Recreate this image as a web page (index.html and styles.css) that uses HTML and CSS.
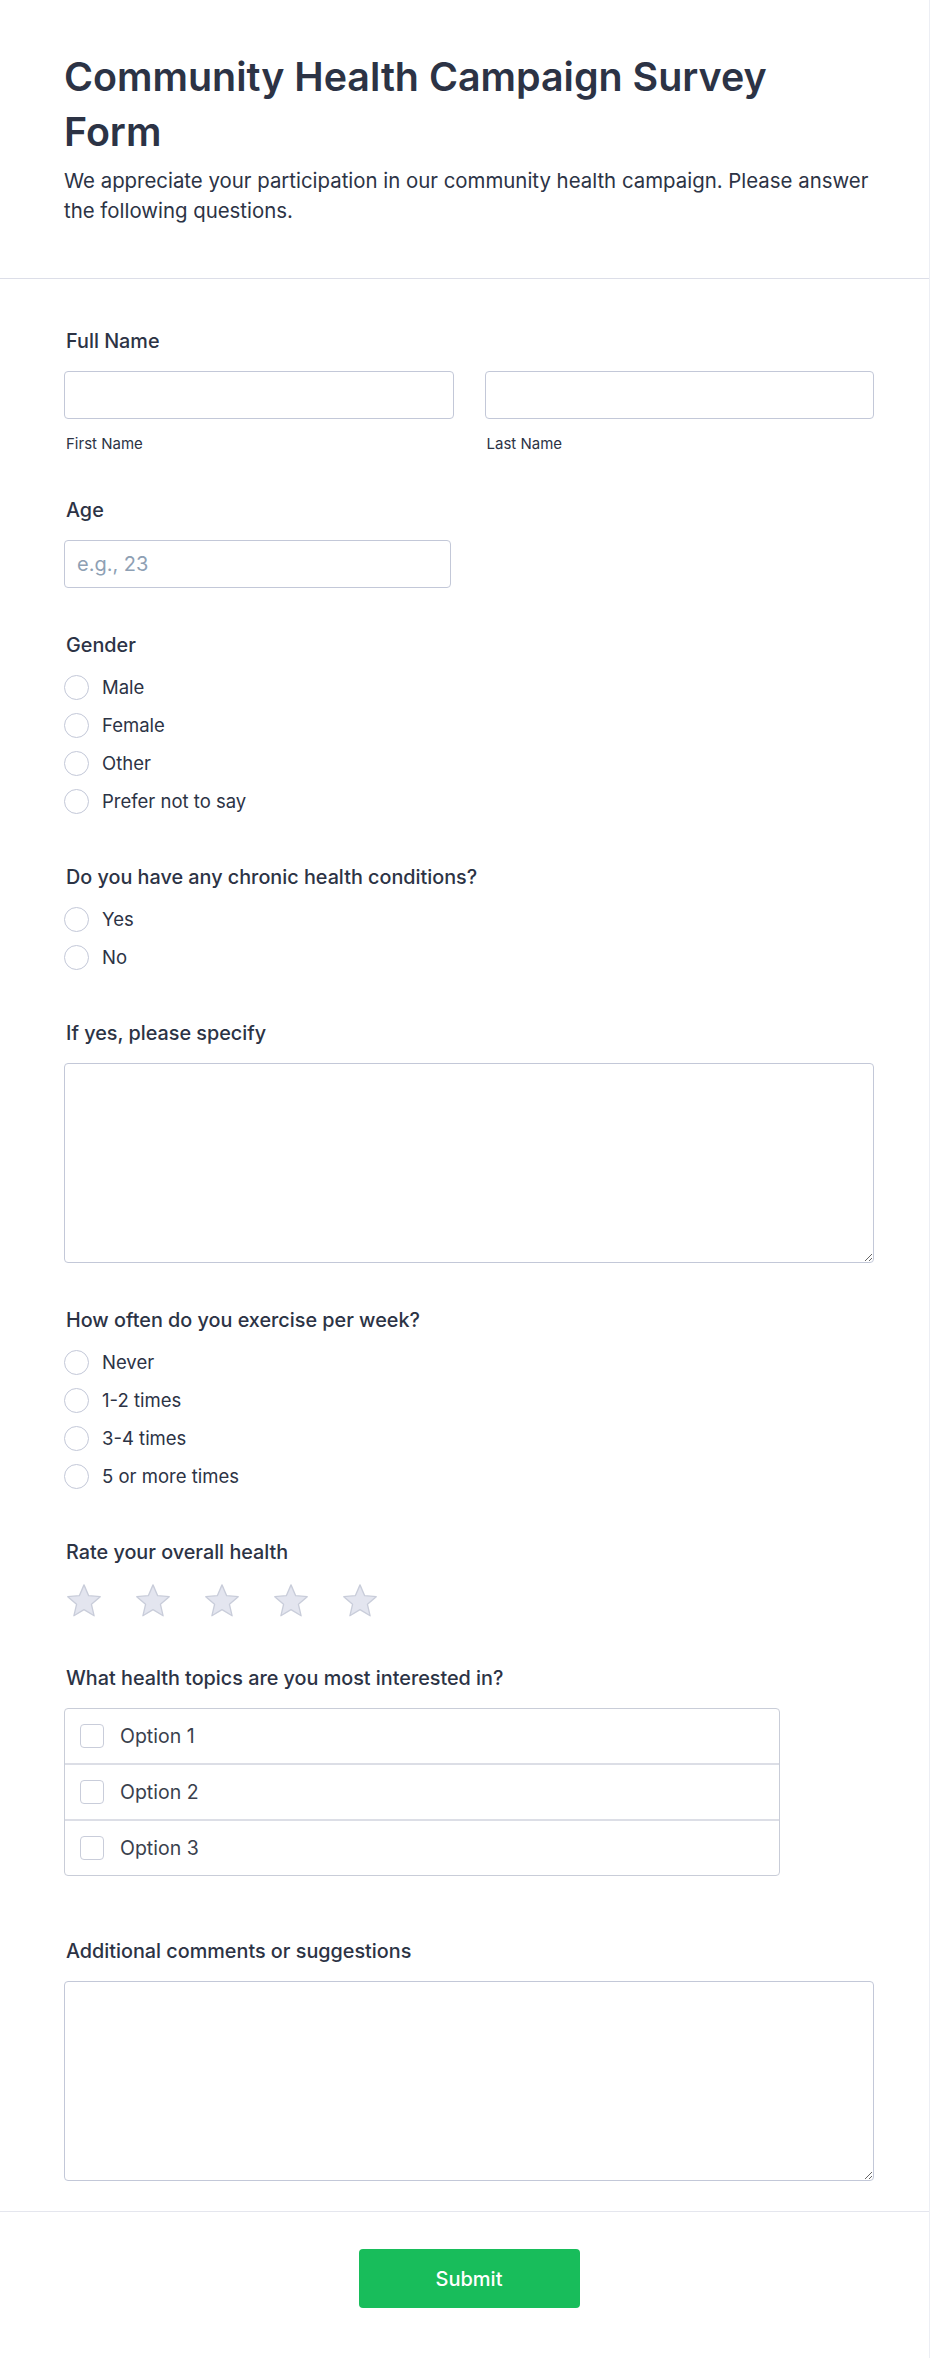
FILE: index.html
```html
<!DOCTYPE html>
<html lang="en">
<head>
<meta charset="utf-8">
<title>Community Health Campaign Survey Form</title>
<link rel="stylesheet" href="styles.css">
</head>
<body>
<div class="page">
  <header class="form-header">
    <h1 class="form-title">Community Health Campaign Survey Form</h1>
    <p class="form-desc">We appreciate your participation in our community health campaign. Please answer the following questions.</p>
  </header>

  <form class="form-body">
    <div class="field">
      <label class="field-label">Full Name</label>
      <div class="name-row">
        <div class="name-col">
          <input class="text-input" type="text">
          <span class="sublabel">First Name</span>
        </div>
        <div class="name-col">
          <input class="text-input" type="text">
          <span class="sublabel">Last Name</span>
        </div>
      </div>
    </div>

    <div class="field">
      <label class="field-label">Age</label>
      <input class="text-input age-input" type="text" placeholder="e.g., 23">
    </div>

    <div class="field">
      <span class="field-label radio-head">Gender</span>
      <div class="radio-list">
        <label class="radio-row"><span class="radio"></span>Male</label>
        <label class="radio-row"><span class="radio"></span>Female</label>
        <label class="radio-row"><span class="radio"></span>Other</label>
        <label class="radio-row"><span class="radio"></span>Prefer not to say</label>
      </div>
    </div>

    <div class="field">
      <span class="field-label radio-head">Do you have any chronic health conditions?</span>
      <div class="radio-list">
        <label class="radio-row"><span class="radio"></span>Yes</label>
        <label class="radio-row"><span class="radio"></span>No</label>
      </div>
    </div>

    <div class="field">
      <label class="field-label">If yes, please specify</label>
      <textarea class="text-area"></textarea>
    </div>

    <div class="field">
      <span class="field-label radio-head">How often do you exercise per week?</span>
      <div class="radio-list">
        <label class="radio-row"><span class="radio"></span>Never</label>
        <label class="radio-row"><span class="radio"></span>1-2 times</label>
        <label class="radio-row"><span class="radio"></span>3-4 times</label>
        <label class="radio-row"><span class="radio"></span>5 or more times</label>
      </div>
    </div>

    <div class="field">
      <span class="field-label">Rate your overall health</span>
      <div class="stars">
        <svg class="star" viewBox="0 0 36 36"><path d="M18 3.5 L22.2 13.2 L32.6 14.1 L24.7 21 L27.1 31.3 L18 25.8 L8.9 31.3 L11.3 21 L3.4 14.1 L13.8 13.2 Z"/></svg>
        <svg class="star" viewBox="0 0 36 36"><path d="M18 3.5 L22.2 13.2 L32.6 14.1 L24.7 21 L27.1 31.3 L18 25.8 L8.9 31.3 L11.3 21 L3.4 14.1 L13.8 13.2 Z"/></svg>
        <svg class="star" viewBox="0 0 36 36"><path d="M18 3.5 L22.2 13.2 L32.6 14.1 L24.7 21 L27.1 31.3 L18 25.8 L8.9 31.3 L11.3 21 L3.4 14.1 L13.8 13.2 Z"/></svg>
        <svg class="star" viewBox="0 0 36 36"><path d="M18 3.5 L22.2 13.2 L32.6 14.1 L24.7 21 L27.1 31.3 L18 25.8 L8.9 31.3 L11.3 21 L3.4 14.1 L13.8 13.2 Z"/></svg>
        <svg class="star" viewBox="0 0 36 36"><path d="M18 3.5 L22.2 13.2 L32.6 14.1 L24.7 21 L27.1 31.3 L18 25.8 L8.9 31.3 L11.3 21 L3.4 14.1 L13.8 13.2 Z"/></svg>
      </div>
    </div>

    <div class="field">
      <span class="field-label">What health topics are you most interested in?</span>
      <div class="check-box">
        <label class="check-row"><span class="checkbox"></span>Option 1</label>
        <label class="check-row"><span class="checkbox"></span>Option 2</label>
        <label class="check-row"><span class="checkbox"></span>Option 3</label>
      </div>
    </div>

    <div class="field field-comments">
      <label class="field-label">Additional comments or suggestions</label>
      <textarea class="text-area"></textarea>
    </div>
  </form>

  <footer class="form-footer">
    <button class="submit-btn" type="button">Submit</button>
  </footer>
</div>
</body>
</html>
```

FILE: styles.css
```css
* {
  box-sizing: border-box;
}

html, body {
  margin: 0;
  padding: 0;
  background: #ffffff;
}

body {
  font-family: Inter, "Noto Sans", "Liberation Sans", sans-serif;
  color: #2c3345;
}

.page {
  width: 930px;
  min-height: 2358px;
  border-right: 1px solid #eceef4;
  display: flex;
  flex-direction: column;
}

.form-header {
  padding: 50px 55px 52px 64px;
  border-bottom: 1px solid #dcdee8;
}

.form-title {
  margin: 0;
  max-width: 780px;
  font-size: 39.4px;
  line-height: 55px;
  font-weight: 600;
  color: #2c3345;
}

.form-desc {
  margin: 6px 0 0;
  font-size: 20.4px;
  line-height: 30px;
  color: #2c3345;
}

.form-body {
  padding: 50px 55px 30px 64px;
  display: flex;
  flex-direction: column;
  gap: 45px;
  border-bottom: 1px solid #e4e6ee;
}

.field {
  display: flex;
  flex-direction: column;
  align-items: flex-start;
}

.field-comments {
  margin-top: 18px;
}

.field-label {
  display: block;
  font-size: 19.8px;
  line-height: 24px;
  font-weight: 500;
  color: #2c3345;
  margin: 0 0 18px 2px;
}

.radio-head {
  margin-bottom: 11px;
}

.name-row {
  display: flex;
  gap: 31px;
  width: 100%;
}

.name-col {
  flex: 1;
  display: flex;
  flex-direction: column;
}

.text-input {
  display: block;
  width: 100%;
  height: 48px;
  border: 1px solid #c3c8d8;
  border-radius: 4px;
  padding: 0 12px;
  font-family: inherit;
  font-size: 20px;
  color: #2c3345;
  background: #fff;
  outline: none;
}

.text-input::placeholder {
  color: #8ea0b4;
}

.age-input {
  width: 387px;
}

.sublabel {
  margin: 16px 0 0 2px;
  font-size: 15px;
  line-height: 18px;
  color: #2c3345;
}

.radio-list {
  display: flex;
  flex-direction: column;
}

.radio-row {
  display: flex;
  align-items: center;
  gap: 13px;
  height: 38px;
  font-size: 18.5px;
  color: #2c3345;
}

.radio {
  width: 25px;
  height: 25px;
  border: 1.5px solid #c3c8d8;
  border-radius: 50%;
  background: #fff;
  flex: none;
}

.text-area {
  display: block;
  width: 100%;
  height: 200px;
  border: 1px solid #c3c8d8;
  border-radius: 4px;
  font-family: inherit;
  font-size: 16px;
  padding: 10px 12px;
  resize: vertical;
  outline: none;
  background: #fff;
}

.stars {
  display: flex;
  gap: 29px;
  margin-top: -1px;
}

.star {
  width: 40px;
  height: 40px;
  display: block;
}

.star path {
  fill: #e3e5ef;
  stroke: #c9cdda;
  stroke-width: 1.2;
  stroke-linejoin: round;
}

.check-box {
  width: 716px;
  border: 1px solid #c9cdd8;
  border-radius: 4px;
  display: flex;
  flex-direction: column;
}

.check-row {
  display: flex;
  align-items: center;
  gap: 16px;
  height: 56px;
  padding-left: 15px;
  font-size: 19.5px;
  color: #3a3f4d;
  border-top: 2px solid #dcdee6;
}

.check-row:first-child {
  border-top: none;
  height: 54px;
}

.checkbox {
  width: 24px;
  height: 24px;
  border: 1.5px solid #c9cdda;
  border-radius: 4px;
  background: #fff;
  flex: none;
}

.form-footer {
  display: flex;
  justify-content: center;
  padding: 37px 55px 48px 64px;
}

.submit-btn {
  width: 221px;
  height: 59px;
  border: none;
  border-radius: 4px;
  background: #18bd5b;
  color: #ffffff;
  font-family: inherit;
  font-size: 20px;
  font-weight: 500;
  cursor: pointer;
}
```
